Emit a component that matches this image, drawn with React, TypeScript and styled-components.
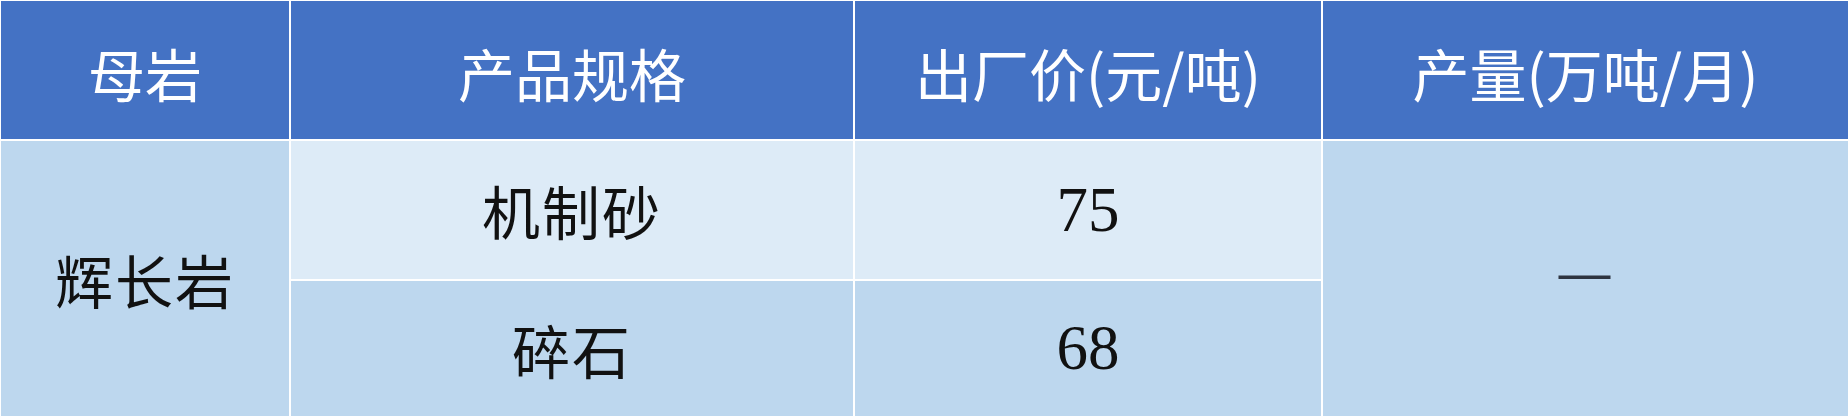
import styled, { createGlobalStyle } from "styled-components";

// STYLED
const GlobalStyle = createGlobalStyle`
  html, body {
    margin: 0;
    padding: 0;
    background: #ffffff;
  }
`;

const TableFrame = styled.div`
  width: 1848px;
  height: 416px;
  box-sizing: border-box;
  padding: 1px 0 0 1px;
  display: grid;
  grid-template-columns: 288px 562px 466px 1fr;
  grid-template-rows: 138px 138px 135px;
  gap: 2px;
  background: #ffffff;
  overflow: hidden;
`;

const HeadCell = styled.div`
  display: flex;
  align-items: center;
  justify-content: center;
  background: #4472c4;
  color: #ffffff;
  font-family: "Noto Sans CJK SC", "Liberation Sans", sans-serif;
  font-size: 57px;
  padding-top: 4px;
  box-sizing: border-box;
`;

type BodyCellProps = {
  $tone: "light" | "dark";
  $span?: boolean;
  $num?: boolean;
};

const BodyCell = styled.div<BodyCellProps>`
  display: flex;
  align-items: center;
  justify-content: center;
  background: ${({ $tone }) => ($tone === "light" ? "#ddebf7" : "#bdd7ee")};
  color: #111111;
  grid-row: ${({ $span }) => ($span ? "span 2" : "auto")};
  font-family: "Liberation Serif", "Noto Sans CJK SC", serif;
  font-size: ${({ $num }) => ($num ? "63px" : "58px")};
  letter-spacing: ${({ $num }) => ($num ? "0" : "2px")};
`;

const Dash = styled.span`
  font-family: "Liberation Sans", sans-serif;
  font-size: 52px;
  line-height: 1;
  color: #2e3440;
  padding-bottom: 14px;
`;

// DATA
const heads = ["母岩", "产品规格", "出厂价(元/吨)", "产量(万吨/月)"];

const App: React.FC = () => {
  return (
    <>
      <GlobalStyle />
      <TableFrame>
        {heads.map((h) => (
          <HeadCell key={h}>{h}</HeadCell>
        ))}
        <BodyCell $tone="dark" $span>
          辉长岩
        </BodyCell>
        <BodyCell $tone="light">机制砂</BodyCell>
        <BodyCell $tone="light" $num>
          75
        </BodyCell>
        <BodyCell $tone="dark" $span>
          <Dash>—</Dash>
        </BodyCell>
        <BodyCell $tone="dark">碎石</BodyCell>
        <BodyCell $tone="dark" $num>
          68
        </BodyCell>
      </TableFrame>
    </>
  );
};

export default App;
